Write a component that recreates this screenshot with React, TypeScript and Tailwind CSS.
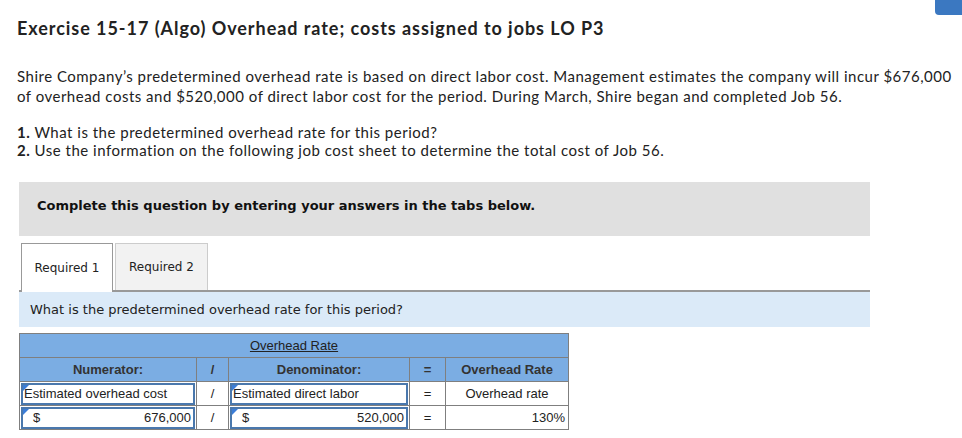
import React from "react";

const Marker: React.FC = () => (
  <span className="absolute left-0 top-0 h-0 w-0 border-t-[6px] border-r-[6px] border-t-[#3b7dd8] border-r-transparent" />
);

const InputCell: React.FC<{ children: React.ReactNode }> = ({ children }) => (
  <td className="relative border border-[#7f7f7f] p-0 h-[24px] bg-white">
    <div className="relative mx-px h-[22px] border-2 border-[#4a78ad] bg-white px-[1px] flex items-center">
      <Marker />
      {children}
    </div>
  </td>
);

const App: React.FC = () => {
  return (
    <div className="relative min-h-[438px] bg-white text-[#222]">
      <div className="absolute right-0 top-0 h-[15px] w-[27px] rounded-bl-[4px] bg-[#3b78c1]" />

      <div className="pl-[17px] pt-[16px]">
        <h1 className="font-['Lato'] text-[18px] font-bold leading-[24px] tracking-[0.95px] text-[#222]">
          Exercise 15-17 (Algo) Overhead rate; costs assigned to jobs LO P3
        </h1>

        <p className="mt-[26px] font-['Lato'] text-[15px] leading-[20px] tracking-[0.5px] text-[#222]">
          Shire Company’s predetermined overhead rate is based on direct labor cost. Management estimates the
          company will incur $676,000
          <br />
          of overhead costs and $520,000 of direct labor cost for the period. During March, Shire began and
          completed Job 56.
        </p>

        <div className="mt-[17px] font-['Lato'] text-[15px] leading-[18px] tracking-[0.5px] text-[#222]">
          <p><span className="font-bold">1.</span> What is the predetermined overhead rate for this period?</p>
          <p><span className="font-bold">2.</span> Use the information on the following job cost sheet to determine the total cost of Job 56.</p>
        </div>
      </div>

      <div className="ml-[19px] w-[851px]">
        <div className="mt-[23px] flex h-[54px] items-center bg-[#e0e0e0] pb-[6px] pl-[18px] font-['DejaVu_Sans'] text-[13px] font-bold text-[#111]">
          Complete this question by entering your answers in the tabs below.
        </div>

        <div className="mt-[7px] flex border-b-2 border-[#999] pl-[2px] font-['DejaVu_Sans'] text-[12px] text-[#222]">
          <div className="-mb-[2px] flex h-[49px] w-[92px] items-center justify-center border border-b-0 border-[#999] bg-white">
            Required 1
          </div>
          <div className="ml-[2px] flex h-[47px] w-[93px] items-center justify-center border border-b-0 border-[#ccc] bg-[#f2f2f2]">
            Required 2
          </div>
        </div>

        <div className="flex h-[35px] items-center bg-[#dbeaf8] pl-[11px] font-['DejaVu_Sans'] text-[13px] text-[#222]">
          What is the predetermined overhead rate for this period?
        </div>

        <table className="mt-[6px] w-[549px] table-fixed border-collapse font-['Liberation_Sans'] text-[13px] text-[#222]">
          <colgroup>
            <col className="w-[177px]" />
            <col className="w-[32px]" />
            <col className="w-[181px]" />
            <col className="w-[36px]" />
            <col className="w-[123px]" />
          </colgroup>
          <tbody>
            <tr className="h-[24px] bg-[#7badE3]">
              <td colSpan={5} className="border border-[#7f7f7f] text-center">
                <span className="underline">Overhead Rate</span>
              </td>
            </tr>
            <tr className="h-[24px] bg-[#7badE3] font-bold text-[#333]">
              <td className="border border-[#7f7f7f] text-center">Numerator:</td>
              <td className="border border-[#7f7f7f] text-center">/</td>
              <td className="border border-[#7f7f7f] text-center">Denominator:</td>
              <td className="border border-[#7f7f7f] text-center">=</td>
              <td className="border border-[#7f7f7f] text-center">Overhead Rate</td>
            </tr>
            <tr>
              <InputCell>
                <span className="text-[#222]">Estimated overhead cost</span>
              </InputCell>
              <td className="border border-[#7f7f7f] text-center">/</td>
              <InputCell>
                <span className="text-[#222]">Estimated direct labor</span>
              </InputCell>
              <td className="border border-[#7f7f7f] text-center">=</td>
              <td className="border border-[#7f7f7f] text-center">Overhead rate</td>
            </tr>
            <tr>
              <InputCell>
                <span className="pl-[9px]">$</span>
                <span className="ml-auto pr-px">676,000</span>
              </InputCell>
              <td className="border border-[#7f7f7f] text-center">/</td>
              <InputCell>
                <span className="pl-[9px]">$</span>
                <span className="ml-auto pr-px">520,000</span>
              </InputCell>
              <td className="border border-[#7f7f7f] text-center">=</td>
              <td className="border border-[#7f7f7f] pr-[3px] text-right">130%</td>
            </tr>
          </tbody>
        </table>
      </div>
    </div>
  );
};

export default App;
